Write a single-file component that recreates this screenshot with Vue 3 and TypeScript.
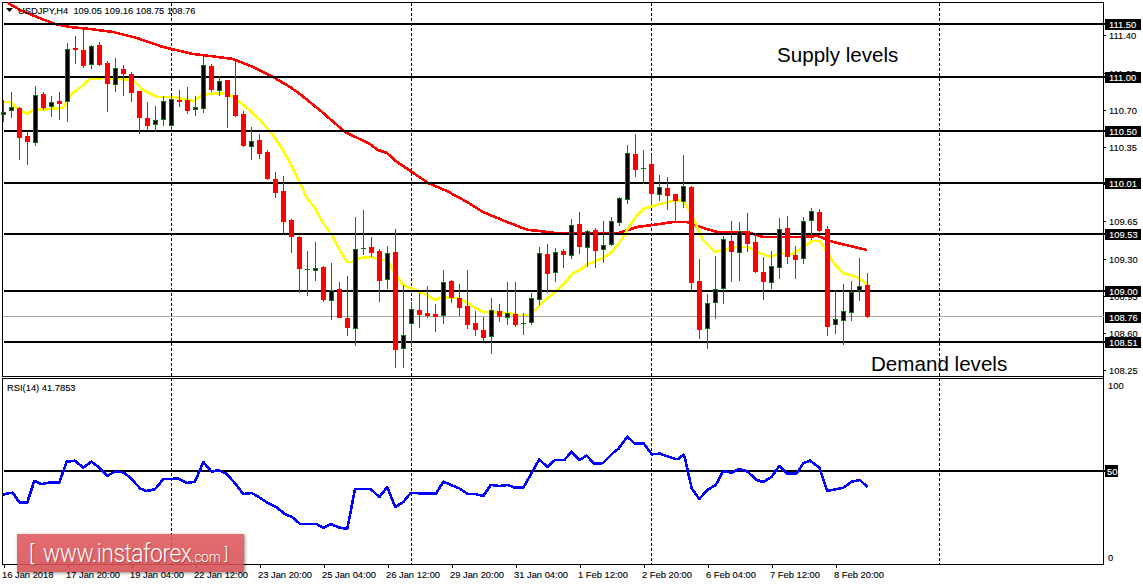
<script setup lang="ts">
type Candle = [number, number, number, number, number];
// wickTop, wickBottom, bodyTop, bodyBottom, bull(1)/bear(0)
const raw: Candle[] = [
  [100,122,112,115,1],[92,118,107,111,1],[107,160,108,138,0],[131,165,136,142,0],[86,146,95,143,1],
  [92,110,94,108,0],[96,117,102,107,1],[92,120,101,104,0],[43,122,49,102,1],[36,64,48,50,0],
  [28,68,50,66,0],[45,69,46,65,1],[42,66,45,65,0],[61,112,63,84,0],[58,92,68,85,1],
  [65,96,69,74,0],[72,102,74,93,0],[91,134,91,118,0],[102,131,118,126,0],[106,132,120,125,1],
  [96,126,101,120,1],[96,130,99,126,1],[90,107,100,102,0],[87,114,100,111,0],[96,116,107,110,1],
  [56,113,65,109,1],[64,92,66,90,0],[76,96,81,91,1],[80,128,80,97,0],[60,117,95,116,0],
  [111,147,114,146,0],[127,160,141,147,1],[134,159,140,154,0],[150,180,152,179,0],[172,198,179,193,0],
  [176,234,191,222,0],[219,253,220,237,0],[236,293,237,269,0],[251,296,269,270,1],[242,281,268,271,1],
  [266,302,267,300,0],[263,320,290,301,1],[282,318,289,318,0],[276,336,318,328,0],[217,346,249,329,1],
  [210,255,248,249,1],[237,257,247,253,0],[249,302,251,281,0],[246,289,253,280,1],[229,368,252,350,0],
  [285,368,335,349,1],[302,347,309,324,1],[293,328,310,315,0],[286,318,313,316,0],[304,332,314,317,0],
  [270,324,282,316,1],[280,303,281,298,0],[284,316,298,308,0],[270,329,306,325,0],[311,336,323,330,0],
  [317,342,330,338,0],[298,354,310,337,1],[304,322,311,317,0],[282,325,313,318,1],[282,327,314,325,0],
  [313,335,323,324,1],[293,325,298,323,1],[247,305,253,300,1],[244,293,254,274,0],[248,282,252,273,1],
  [249,268,251,255,0],[219,259,225,256,1],[212,254,224,247,0],[230,267,231,248,1],[228,268,230,251,0],
  [221,263,245,250,1],[217,246,221,245,1],[197,226,198,223,1],[145,204,153,200,1],[134,177,154,170,0],
  [150,184,168,169,1],[154,205,164,194,0],[175,201,187,195,1],[177,210,188,196,0],[194,222,194,201,0],
  [155,208,186,202,1],[186,291,187,283,0],[259,339,281,330,0],[294,349,303,329,1],[256,319,289,303,1],
  [236,304,239,289,1],[221,282,241,252,0],[222,281,231,253,1],[213,252,232,244,0],[233,273,242,272,0],
  [257,300,272,282,0],[251,289,266,283,1],[218,279,229,268,1],[216,264,228,257,0],[246,279,255,260,0],
  [217,264,221,259,1],[208,240,211,221,1],[209,232,212,231,0],[226,336,229,327,0],[290,334,319,325,1],
  [284,345,311,321,1],[281,321,292,313,1],[258,301,286,291,1],[273,318,285,317,0],
];
const candles = raw.map((c, i) => ({
  x: 3 + 8 * i,
  wickTop: c[0],
  wickH: c[1] - c[0],
  top: c[2],
  h: Math.max(c[3] - c[2], 1),
  bull: c[4] === 1,
}));

const pts = (a: number[][]) => a.map((p) => p.join(",")).join(" ");
const zoomed = (a: number[][], ox: number, oy: number) =>
  a.map((p) => [+(ox + p[0] / 3).toFixed(1), +(oy + p[1] / 3).toFixed(1)]);

const yellow = pts([
  [3,102],[10,102],[17,108],[27,114],[33,110],[50,109],[63,108],[72,93],[80,88],[90,79],[105,78],[133,80],[143,90],[157,97],[173,97],
  [193,101],[200,97],[207,94],[227,93],[237,100],[247,108],[260,120],[273,135],[283,150],[290,163],[300,183],[307,198],[315,208],
  [323,223],[332,235],[338,247],[347,262],[352,262],[360,258],[372,257],[380,260],[387,260],[393,270],[403,285],[413,289],[427,295],
  [435,300],[443,297],[457,298],[467,303],[483,312],[507,313],[520,316],[530,315],[543,302],[557,290],[565,283],[572,274],[580,270],
  [588,264],[603,258],[612,252],[620,242],[627,230],[635,218],[643,209],[660,204],[673,201],[682,200],[688,208],[695,222],[703,240],
  [715,252],[723,250],[737,247],[748,247],[760,253],[770,257],[780,253],[793,254],[803,247],[812,241],[820,241],[827,252],[833,262],
  [843,273],[857,277],[867,284],
]);
const red = pts([
  [8,3],[20,10],[37,17],[55,24],[70,27],[90,29],[113,32],[137,38],[163,47],[193,54],[210,56],[233,59],[253,67],[273,77],[290,87],
  [300,94],[322,112],[345,132],[370,144],[378,150],[387,153],[397,162],[412,172],[428,183],[447,191],[467,202],[483,212],[507,222],
  [528,230],[540,231],[555,233],[619,233],[637,227],[653,225],[673,222],[687,222],[700,227],[717,232],[747,232],[763,237],[800,237],
  [818,236],[833,242],[850,246],[867,250],
]);
const blue = pts([
  ...zoomed([[8,375],[25,370],[38,368],[58,397],[82,397],[103,333],[125,342],[145,338],[178,338],[200,275],[225,272],[250,293],[274,275],
    [295,290],[322,317],[345,305],[370,307],[390,322],[420,355],[440,363],[465,358],[490,327],[535,326],[560,339],[585,335],[610,276],
    [635,305],[655,300],[680,312],[705,340],[730,372],[755,369],[775,380],[805,400],[830,412],[855,433],[875,440],[898,460]], 0, 370),
  ...zoomed([[0,312],[50,312],[70,324],[92,312],[120,323],[142,327],[165,207],[212,207],[238,231],[262,201],[286,261],[310,246],[332,219],
    [408,221],[430,185],[480,206],[503,222],[525,222],[550,228],[572,195],[600,198],[622,195],[645,203],[670,203],[718,118],[742,141],
    [765,120],[793,120],[815,95],[838,120],[860,107],[883,131],[900,131]], 300, 420),
  ...zoomed([[10,128],[40,98],[55,87],[82,50],[105,71],[132,71],[155,103],[180,101],[225,117],[235,117],[250,104],[255,115],[275,205],
    [298,237],[322,210],[347,195],[370,153],[395,158],[418,147],[440,153],[470,180],[490,186],[515,170],[538,138],[560,160],[590,160],
    [610,130],[630,122],[658,143],[682,213],[730,203],[755,185],[780,180],[802,201]], 600, 420),
]);

const title = "USDJPY,H4  109.05 109.16 108.75 108.76";
const levels = [24, 77, 131, 183, 234, 291, 342];
const separators = [171, 411, 651, 939];
const priceTicks = [
  { y: 35, t: "111.40" }, { y: 73, t: "111.05" }, { y: 110, t: "110.70" }, { y: 147, t: "110.35" }, { y: 184, t: "110.00" },
  { y: 221, t: "109.65" }, { y: 259, t: "109.30" }, { y: 296, t: "108.95" }, { y: 333, t: "108.60" }, { y: 370, t: "108.25" },
];
const priceTags = [
  { y: 24, t: "111.50" }, { y: 77, t: "111.00" }, { y: 131, t: "110.50" }, { y: 183, t: "110.01" },
  { y: 234, t: "109.53" }, { y: 291, t: "109.00" }, { y: 317, t: "108.76" }, { y: 342, t: "108.51" },
];
const timeTicks = [
  "16 Jan 2018", "17 Jan 20:00", "19 Jan 04:00", "22 Jan 12:00", "23 Jan 20:00", "25 Jan 04:00", "26 Jan 12:00",
  "29 Jan 20:00", "31 Jan 04:00", "1 Feb 12:00", "2 Feb 20:00", "6 Feb 04:00", "7 Feb 12:00", "8 Feb 20:00",
].map((t, i) => ({ t, x: 4 + 64 * i }));
</script>

<template>
  <div class="terminal">
    <svg class="chart" width="1143" height="585" viewBox="0 0 1143 585" xmlns="http://www.w3.org/2000/svg">
      <g class="crisp">
        <rect class="ink" x="2" y="2" width="1102" height="1" />
        <rect class="ink" x="2" y="2" width="1" height="375" />
        <rect class="ink" x="2" y="376" width="1102" height="1" />
        <rect class="ink" x="2" y="378" width="1102" height="1" />
        <rect class="ink" x="2" y="378" width="1" height="187" />
        <rect class="ink" x="2" y="564" width="1102" height="1" />
        <rect class="ink" x="1103" y="2" width="1" height="563" />
        <line v-for="x in separators" :key="x" class="separator" :x1="x + 0.5" :x2="x + 0.5" y1="3" y2="564" />
      </g>

      <polyline class="ma red crisp" :points="red" />
      <polyline class="ma yellow crisp" :points="yellow" />

      <g class="crisp">
        <rect class="grey" x="3" y="316" width="1101" height="1" />
        <rect v-for="y in levels" :key="y" class="ink" x="4" :y="y - 1" width="1101" height="2" />
      </g>

      <g class="crisp">
        <g v-for="c in candles" :key="c.x">
          <rect :class="c.bull ? 'bull' : 'bear'" :x="c.x" :y="c.wickTop" width="1" :height="c.wickH" />
          <rect v-if="!c.bull" class="bear" :x="c.x - 2" :y="c.top" width="5" :height="c.h" />
          <rect v-else-if="c.h < 2" class="bull" :x="c.x - 2" :y="c.top" width="5" height="1" />
          <rect v-else class="bull-body" :x="c.x - 1.5" :y="c.top + 0.5" width="4" :height="c.h - 1" />
        </g>
      </g>

      <g class="crisp">
        <rect class="ink" x="4" y="470" width="1101" height="2" />
      </g>
      <polyline class="ma blue crisp" :points="blue" />

      <path d="M6 8h7l-3.5 4z" class="ink" />
      <text class="small" x="18" y="14">{{ title }}</text>
      <text class="small" x="7" y="391">RSI(14) 41.7853</text>

      <text class="note" x="777" y="62">Supply levels</text>
      <text class="note" x="871" y="371">Demand levels</text>

      <g class="crisp">
        <rect v-for="p in priceTicks" :key="p.t" class="ink" x="1104" :y="p.y" width="2" height="1" />
        <rect v-for="p in timeTicks" :key="p.t" class="ink" :x="p.x" y="565" width="1" height="3" />
      </g>
      <text v-for="p in priceTicks" :key="p.t" class="small" x="1109" :y="p.y + 4">{{ p.t }}</text>
      <g v-for="p in priceTags" :key="p.t">
        <rect class="ink crisp" x="1105" :y="p.y - 5.5" width="36" height="11" />
        <text class="small light" x="1109" :y="p.y + 4">{{ p.t }}</text>
      </g>
      <text class="small" x="1108" y="389">100</text>
      <rect class="ink crisp" x="1105" y="465" width="13" height="12" />
      <text class="small light" x="1107" y="475">50</text>
      <text class="small" x="1108" y="561">0</text>
      <text v-for="p in timeTicks" :key="p.t" class="small" :x="p.x - 2" y="577.5">{{ p.t }}</text>
    </svg>

    <div class="watermark">
      <span class="bracket">[</span>
      <span class="site">www.instaforex<small>.com</small></span>
      <span class="bracket end">]</span>
    </div>
  </div>
</template>

<style scoped>
.terminal {
  position: relative;
  width: 1143px;
  height: 585px;
  background: #fff;
  overflow: hidden;
}
.chart {
  display: block;
}
.crisp {
  shape-rendering: crispEdges;
}
.ink {
  fill: #000;
}
.grey {
  fill: #a9a9a9;
}
.separator {
  stroke: #000;
  stroke-width: 1;
  stroke-dasharray: 3 2;
}
.ma {
  fill: none;
  stroke-width: 2.6;
  stroke-linejoin: round;
}
.red {
  stroke: #f00;
}
.yellow {
  stroke: #ff0;
}
.blue {
  stroke: #00f;
}
.bull {
  fill: #0a7a0a;
}
.bear {
  fill: #f00;
}
.bull-body {
  fill: #000;
  stroke: #0a7a0a;
  stroke-width: 1;
}
.small {
  font-family: "Liberation Sans", Arial, sans-serif;
  font-size: 9.35px;
  fill: #000;
  stroke: #000;
  stroke-width: 0.12px;
  white-space: pre;
}
.light {
  fill: #fff;
  stroke: #fff;
}
.note {
  font-family: "Liberation Sans", Arial, sans-serif;
  font-size: 20.6px;
  fill: #000;
}
.watermark {
  position: absolute;
  left: 17px;
  top: 534px;
  width: 227px;
  height: 38px;
  display: flex;
  align-items: center;
  padding-left: 12px;
  box-sizing: border-box;
  background: linear-gradient(rgba(225, 92, 96, 0.9), rgba(212, 78, 82, 0.88));
  box-shadow: 1px 1px 3px rgba(0, 0, 0, 0.45);
  color: #fff;
  font-family: Roboto, sans-serif;
  font-weight: 300;
  text-shadow: 1px 1px 1px rgba(110, 10, 10, 0.45);
}
.bracket {
  font-size: 22px;
}
.end {
  margin-left: 3px;
  font-size: 17px;
}
.site {
  margin-left: 9px;
  margin-right: -24px;
  font-size: 26px;
  letter-spacing: -0.6px;
  transform: scaleX(0.88);
  transform-origin: left center;
}
.site small {
  font-size: 15.5px;
  letter-spacing: -0.2px;
}
</style>
